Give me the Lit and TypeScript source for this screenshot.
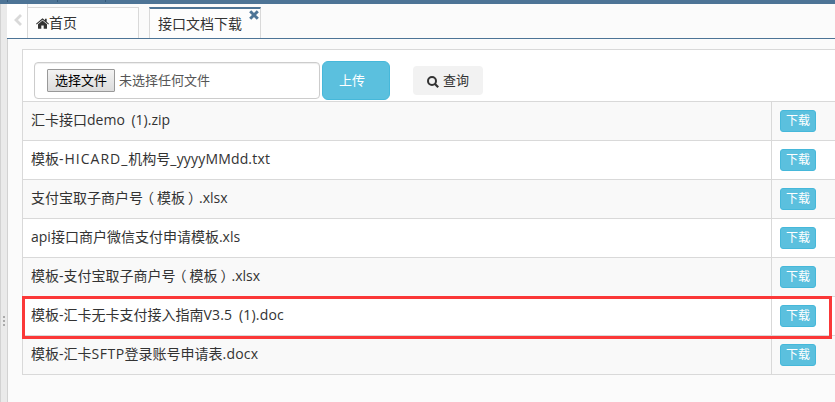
import { LitElement, html, css } from "lit";
import { customElement, property } from "lit/decorators.js";

// A run of text with its own tracking in px.
type Run = [text: string, tracking?: number];

@customElement("file-row")
class FileRow extends LitElement {
  @property({ attribute: false }) runs: Run[] = [];

  static styles = css`
    :host {
      display: flex;
      height: 39px;
      box-sizing: border-box;
      border-bottom: 1px solid #d9d9d9;
    }
    .name {
      flex: none;
      box-sizing: border-box;
      width: 749px;
      padding-left: 8px;
      border-right: 1px solid #d9d9d9;
      line-height: 36px;
      white-space: nowrap;
      word-spacing: 3px;
    }
    .open { margin: 0 3px 0 -3px; }
    .close { margin: 0 -3px 0 3px; }
    .act { padding: 8px 0 0 8px; }
    .dl {
      display: block;
      box-sizing: border-box;
      width: 36px;
      height: 22px;
      padding: 0;
      border: 1px solid #46b8da;
      border-radius: 3px;
      background: #5bc0de;
      color: #fff;
      font: 12px/20px "Open Sans", "Noto Sans CJK SC", sans-serif;
      text-align: center;
    }
  `;

  renderRun([text, tracking = 0]: Run) {
    if (text === "（") return html`<span class="open">（</span>`;
    if (text === "）") return html`<span class="close">）</span>`;
    return tracking ? html`<span style="letter-spacing:${tracking}px">${text}</span>` : text;
  }

  render() {
    return html`<div class="name">${this.runs.map((r) => this.renderRun(r))}</div>
      <div class="act"><button class="dl">下载</button></div>`;
  }
}

@customElement("app-root")
class AppRoot extends LitElement {
  files: Run[][] = [
    [["汇卡接口demo (1).zip"]],
    [["模板"], ["-HICARD_", 1], ["机构号"], ["_yyyyMMdd.txt", 0.17]],
    [["支付宝取子商户号"], ["（"], ["模板"], ["）"], [".xlsx"]],
    [["api接口商户微信支付申请模板.xls"]],
    [["模板-支付宝取子商户号"], ["（"], ["模板"], ["）"], [".xlsx"]],
    [["模板-汇卡无卡支付接入指南"], ["V3.5 (1).doc", 0.17]],
    [["模板-汇卡"], ["SFTP", 0.5], ["登录账号申请表"], [".docx", 0.2]],
  ];

  static styles = css`
    :host {
      display: flex;
      flex-direction: column;
      position: relative;
      width: 835px;
      height: 402px;
      overflow: hidden;
      background: #fbfbfb;
      color: #333;
      font: 14px/20px "Open Sans", "Noto Sans CJK SC", sans-serif;
    }
    * { box-sizing: border-box; }
    .top { display: flex; flex: none; height: 4px; background: #4d7496; }
    .top i { height: 2px; border-right: 1px solid #34597a; }
    .top .a { width: 8px; }
    .top .b { width: 50px; }
    .top .c { width: 48px; }
    .body { display: flex; flex: 1; min-height: 0; }
    .split {
      display: flex;
      flex-direction: column;
      align-items: center;
      gap: 2px;
      flex: none;
      width: 8px;
      padding-top: 312px;
      border: solid #d2d2d2;
      border-width: 0 1px;
      background: #eaeaea;
    }
    .split i { width: 2px; height: 2px; background: #aaa; flex: none; }
    .main { flex: 1; min-width: 0; }
    .tabs {
      display: flex;
      height: 35px;
      border-bottom: 1px solid #4d7496;
      margin-left: -1px;
    }
    .prev {
      width: 21px;
      border-right: 1px solid #d9d9d9;
      padding: 9px 0 0 6px;
      background: #fff;
    }
    svg { display: block; flex: none; }
    .tab {
      display: flex;
      position: relative;
      margin-top: 3px;
      width: 111px;
      height: 31px;
      border: solid #d9d9d9;
      border-width: 1px 1px 0 0;
      background: #fdfdfd;
      padding: 5px 0 0 8px;
    }
    .tab svg { margin: 5px 0 0; }
    .tab.on {
      width: 112px;
      margin-left: 10px;
      border-width: 2px 1px 0 1px;
      border-top-color: #4d7496;
      padding-top: 5px;
    }
    .tab.on .x { position: absolute; right: 1px; top: 1px; margin: 0; }
    .panel {
      margin: 10px 0 0 14px;
      border: solid #d9d9d9;
      border-width: 1px 0 0 1px;
      background: #fff;
    }
    .bar {
      display: flex;
      height: 52px;
      padding-left: 11px;
      border-bottom: 1px solid #d9d9d9;
    }
    .file {
      display: flex;
      width: 286px;
      height: 37px;
      margin-top: 12px;
      padding: 6px 12px;
      border: 1px solid #ccc;
      border-radius: 4px;
      box-shadow: inset 0 1px 1px rgba(0, 0, 0, 0.075);
      color: #555;
      font-size: 13px;
      line-height: 23px;
    }
    .pick {
      width: 68px;
      height: 23px;
      margin-right: 4px;
      padding: 0;
      border: 1px solid #999;
      border-radius: 1px;
      background: linear-gradient(#f3f3f3, #dcdcdc);
      color: #000;
      font: 13px/21px "Open Sans", "Noto Sans CJK SC", sans-serif;
    }
    .up {
      width: 68px;
      height: 39px;
      margin: 11px 0 0 2px;
      padding: 0 8px 0 0;
      border: 1px solid #46b8da;
      border-radius: 6px;
      background: #5bc0de;
      color: #fff;
      font: 13px/37px "Open Sans", "Noto Sans CJK SC", sans-serif;
    }
    .query {
      display: flex;
      width: 70px;
      height: 29px;
      margin: 16px 0 0 23px;
      padding: 0 0 0 14px;
      border: 0;
      border-radius: 4px;
      background: #f2f2f2;
      color: #333;
      font: 13px/29px "Open Sans", "Noto Sans CJK SC", sans-serif;
    }
    .query svg { margin: 10px 4px 0 0; }
    file-row:nth-child(odd) { background: #f9f9f9; }
    .mark {
      position: absolute;
      left: 22px;
      top: 296px;
      width: 810px;
      height: 43px;
      border: 3px solid #fb3838;
    }
  `;

  render() {
    return html`
      <div class="top"><i class="a"></i><i class="b"></i><i class="c"></i></div>
      <div class="body">
        <div class="split"><i></i><i></i><i></i></div>
        <div class="main">
          <div class="tabs">
            <div class="prev">
              <svg width="10" height="14" viewBox="0 0 10 14"><path d="M8 2 3 7l5 5" fill="none" stroke="#d9d9d9" stroke-width="2.8" /></svg>
            </div>
            <div class="tab">
              <svg width="13" height="11" viewBox="0 0 13 11"><path fill="#333" d="M6.5 2.4 11 6.2V10.2q0 .5-.5.5H7.7V7.5H5.3v3.2H2.5q-.5 0-.5-.5V6.2ZM6.5 0.2 9 2.3V.7h1.7v3.1L13 5.7l-.7.8L6.5 1.7.7 6.5 0 5.7Z" /></svg>
              <span>首页</span>
            </div>
            <div class="tab on">
              <span>接口文档下载</span>
              <svg class="x" width="10" height="10" viewBox="0 0 10 10"><path d="M1.2 1.2 8.8 8.8M8.8 1.2 1.2 8.8" stroke="#4d7496" stroke-width="3" /></svg>
            </div>
          </div>
          <div class="panel">
            <div class="bar">
              <div class="file"><button class="pick">选择文件</button><span>未选择任何文件</span></div>
              <button class="up">上传</button>
              <button class="query">
                <svg width="12" height="12" viewBox="0 0 12 12"><circle cx="5" cy="5" r="4" fill="none" stroke="#333" stroke-width="2" /><path d="m8 8 3.2 3.2" stroke="#333" stroke-width="2.2" /></svg>
                <span>查询</span>
              </button>
            </div>
            <div>${this.files.map((f) => html`<file-row .runs=${f}></file-row>`)}</div>
          </div>
        </div>
      </div>
      <div class="mark"></div>
    `;
  }
}
